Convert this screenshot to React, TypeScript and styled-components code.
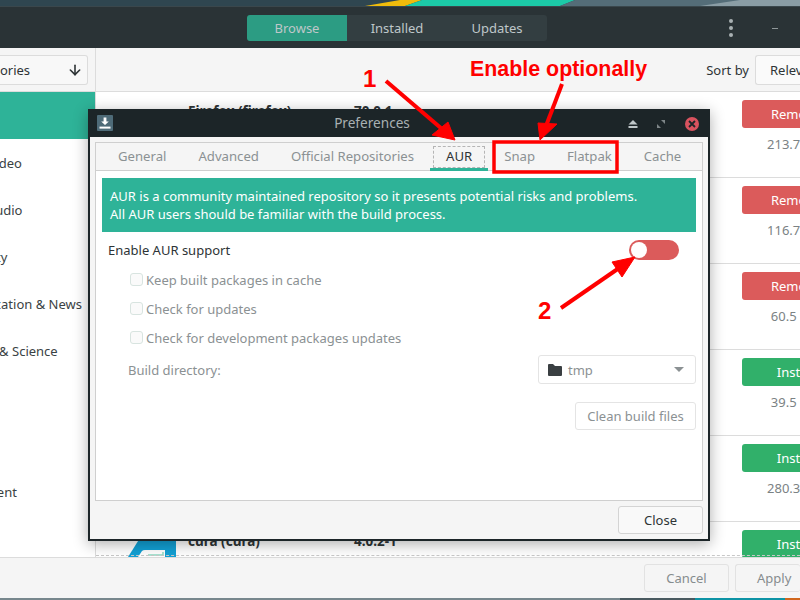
import React from 'react';
import styled, { createGlobalStyle } from 'styled-components';
import { ArrowDown } from 'lucide-react';

const Global = createGlobalStyle`
  html, body { margin: 0; padding: 0; }
  body { width: 800px; height: 600px; overflow: hidden; font-family: "Noto Sans", sans-serif; font-size: 13px; color: #2e3436; }
  * { box-sizing: border-box; }
`;

const Screen = styled.div`
  position: relative;
  width: 800px;
  height: 600px;
  overflow: hidden;
  display: flex;
  flex-direction: column;
  background: #f5f5f5;
`;

const TopWallpaper = styled.svg`
  display: block;
  flex: 0 0 6px;
  width: 800px;
  height: 6px;
`;

const BottomWallpaper = styled.svg`
  display: block;
  flex: 0 0 2px;
  width: 800px;
  height: 2px;
`;

const HeaderBar = styled.header`
  flex: 0 0 42px;
  display: flex;
  align-items: center;
  justify-content: center;
  position: relative;
  padding-right: 6px;
  background: #2a3336;
  border-top: 1px solid #3a474c;
`;

const Switcher = styled.div`
  display: flex;
  height: 26px;
  border-radius: 3px;
  overflow: hidden;
`;

const SwitchTab = styled.div<{ $active?: boolean }>`
  width: 100px;
  display: flex;
  align-items: center;
  justify-content: center;
  color: #bfc7c9;
  background: ${(p) => (p.$active ? '#2c9c83' : '#333e41')};
`;

const HeaderTools = styled.div`
  position: absolute;
  right: 22px;
  top: 0;
  bottom: 0;
  display: flex;
  align-items: center;
  gap: 39px;
`;

const Kebab = styled.div`
  display: flex;
  flex-direction: column;
  gap: 3px;
`;

const Dot = styled.span`
  width: 4px;
  height: 4px;
  border-radius: 50%;
  background: #a9b1b3;
`;

const Minimize = styled.span`
  width: 6px;
  height: 1px;
  background: #8f9799;
  margin-top: 1px;
`;

const Main = styled.div`
  flex: 1;
  display: flex;
  min-height: 0;
`;

const Sidebar = styled.aside`
  flex: 0 0 96px;
  display: flex;
  flex-direction: column;
  overflow: hidden;
  background: #fff;
  border-right: 1px solid #dcdcdc;
`;

const SidebarTop = styled.div`
  flex: 0 0 44px;
  display: flex;
  align-items: center;
  padding-right: 7px;
  background: #f5f5f5;
  border-bottom: 1px solid #dcdcdc;
`;

const Dropdown = styled.div`
  width: 88px;
  height: 30px;
  flex: 0 0 88px;
  display: flex;
  align-items: center;
  justify-content: space-between;
  padding-right: 4px;
  background: #f8f8f8;
  border: 1px solid #dcdcdc;
  border-left: 0;
  border-radius: 0 3px 3px 0;
  white-space: nowrap;
`;

const DropdownLabel = styled.span`
  margin-left: -54px;
`;

const Category = styled.div<{ $active?: boolean }>`
  flex: 0 0 47px;
  display: flex;
  align-items: center;
  white-space: nowrap;
  background: ${(p) => (p.$active ? '#2eb398' : 'transparent')};
`;

const CategoryLabel = styled.span`
  margin-left: -65px;
  color: #3a4244;
`;

const Content = styled.section`
  flex: 1;
  min-width: 0;
  display: flex;
  flex-direction: column;
  overflow: hidden;
  position: relative;
`;

const Toolbar = styled.div`
  flex: 0 0 44px;
  display: flex;
  align-items: center;
  justify-content: flex-end;
  gap: 6px;
  background: #f5f5f5;
  border-bottom: 1px solid #dcdcdc;
`;

const SortButton = styled.div`
  width: 45px;
  height: 30px;
  padding-left: 14px;
  display: flex;
  align-items: center;
  overflow: hidden;
  white-space: nowrap;
  background: #fafafa;
  border: 1px solid #dcdcdc;
  border-right: 0;
  border-radius: 3px 0 0 3px;
`;

const Row = styled.div`
  flex: 0 0 86px;
  width: 753px;
  display: flex;
  padding: 8px 0 0 32px;
  background: #fff;
  border-bottom: 1px solid #dcdcdc;
`;

const RowIcon = styled.svg`
  flex: 0 0 48px;
  width: 48px;
  height: 48px;
`;

const RowName = styled.div`
  flex: 0 0 166px;
  margin-left: 12px;
  padding-top: 2px;
  font-weight: 700;
  font-size: 13.5px;
  color: #2e3436;
`;

const RowVersion = styled.div`
  flex: 1;
  padding-top: 2px;
  font-weight: 700;
  font-size: 13.5px;
  color: #2e3436;
`;

const RowAction = styled.div`
  flex: 0 0 107px;
  display: flex;
  flex-direction: column;
  align-items: center;
  gap: 7px;
  white-space: nowrap;
  color: #7b8284;
`;

const ActionButton = styled.div<{ $tone: 'red' | 'green' }>`
  width: 107px;
  height: 28px;
  display: flex;
  align-items: center;
  justify-content: center;
  color: #fff;
  border-radius: 3px;
  background: ${(p) => (p.$tone === 'red' ? '#db5b5b' : '#31b06a')};
`;

const Overshoot = styled.div`
  position: absolute;
  left: 0;
  right: 0;
  bottom: 1px;
  border-top: 1px dashed #c8c8c8;
`;

const Footer = styled.footer`
  flex: 0 0 41px;
  display: flex;
  justify-content: flex-end;
  align-items: center;
  gap: 6px;
  background: #f5f5f5;
  border-top: 1px solid #dcdcdc;
`;

const FooterButton = styled.div<{ $w: number }>`
  width: ${(p) => p.$w}px;
  height: 28px;
  display: flex;
  align-items: center;
  justify-content: ${(p) => (p.$w < 70 ? 'flex-start' : 'center')};
  padding-left: ${(p) => (p.$w < 70 ? '21px' : '0')};
  white-space: nowrap;
  color: #868c8e;
  background: #f5f5f5;
  border: 1px solid #e2e2e2;
  border-right: ${(p) => (p.$w < 70 ? '0' : '1px solid #e2e2e2')};
  border-radius: 3px;
`;

const Dialog = styled.div`
  position: absolute;
  left: 88px;
  top: 109px;
  width: 622px;
  height: 432px;
  display: flex;
  flex-direction: column;
  background: #f5f5f5;
  border: 2px solid #1c2528;
  border-top-width: 1px;
  box-shadow: 0 3px 14px rgba(0, 0, 0, 0.32);
`;

const TitleBar = styled.div`
  flex: 0 0 27px;
  position: relative;
  display: flex;
  align-items: center;
  justify-content: center;
  padding: 0 54px 2px 0;
  font-size: 13.6px;
  background: #1c2528;
  color: #a9b1b3;
`;

const AppIcon = styled.div`
  position: absolute;
  left: 7px;
  top: 5px;
  width: 16px;
  height: 16px;
  border-radius: 1px;
  background: #4e6b78;
  display: flex;
  align-items: center;
  justify-content: center;
`;

const TitleTools = styled.div`
  position: absolute;
  right: 9px;
  top: 0;
  bottom: 0;
  display: flex;
  align-items: center;
`;

const CloseDot = styled.div`
  width: 14px;
  height: 14px;
  margin-left: 20px;
  border-radius: 50%;
  background: #d9535f;
  display: flex;
  align-items: center;
  justify-content: center;
`;

const Notebook = styled.div`
  margin: 5px 5px 0 5px;
  height: 359px;
  display: flex;
  flex-direction: column;
  border: 1px solid #cfcfcf;
`;

const TabStrip = styled.div`
  flex: 0 0 28px;
  display: flex;
  padding-left: 6px;
  font-size: 13.15px;
  background: #f5f5f5;
  border-bottom: 1px solid #cfcfcf;
`;

const Tab = styled.div<{ $active?: boolean }>`
  display: flex;
  align-items: center;
  justify-content: center;
  white-space: nowrap;
  padding: ${(p) => (p.$active ? '0 3px' : '0 16px 2px')};
  color: ${(p) => (p.$active ? '#2e3436' : '#8b9193')};
  ${(p) => (p.$active ? 'border-bottom: 3px solid #2eb398; margin-bottom: -1px;' : '')}
`;

const ActiveFocus = styled.span`
  border: 1px dashed #b5b5b5;
  padding: 0 12px 2px;
  margin-top: 2px;
`;

const Page = styled.div`
  flex: 1;
  background: #fff;
  padding: 7px 6px 0 6px;
  display: flex;
  flex-direction: column;
`;

const InfoBox = styled.div`
  height: 54px;
  flex: 0 0 54px;
  padding: 9px 8px 0;
  background: #2eb398;
  color: #fff;
  line-height: 18px;
`;

const EnableRow = styled.div`
  margin-top: 8px;
  height: 20px;
  display: flex;
  align-items: center;
  justify-content: space-between;
  padding: 0 17px 0 6px;
`;

const Toggle = styled.div`
  width: 50px;
  height: 20px;
  border-radius: 10px;
  background: #db5b5b;
  padding: 2px;
`;

const Knob = styled.div`
  width: 16px;
  height: 16px;
  border-radius: 50%;
  background: #fff;
`;

const OptionList = styled.div`
  margin-top: 5px;
  padding-left: 28px;
  display: flex;
  flex-direction: column;
`;

const CheckRow = styled.div`
  height: 29px;
  display: flex;
  align-items: center;
  gap: 3px;
  color: #8b9193;
`;

const CheckBox = styled.span`
  width: 13px;
  height: 13px;
  border: 1px solid #d8e4e0;
  border-radius: 3px;
  background: #fafafa;
`;

const DirectoryRow = styled.div`
  margin-top: 3px;
  padding-left: 26px;
  display: flex;
  align-items: center;
  justify-content: space-between;
  color: #8b9193;
`;

const Combo = styled.div`
  width: 158px;
  height: 29px;
  display: flex;
  align-items: center;
  gap: 6px;
  padding: 0 11px 0 9px;
  background: #fff;
  border: 1px solid #e4e4e4;
  border-radius: 3px;
`;

const Caret = styled.span`
  margin-left: auto;
  width: 0;
  height: 0;
  border-left: 5px solid transparent;
  border-right: 5px solid transparent;
  border-top: 5px solid #8b9193;
`;

const CleanRow = styled.div`
  margin-top: 18px;
  display: flex;
  justify-content: flex-end;
`;

const CleanButton = styled.div`
  width: 121px;
  height: 28px;
  display: flex;
  align-items: center;
  justify-content: center;
  color: #8b9193;
  border: 1px solid #e4e4e4;
  border-radius: 3px;
`;

const DialogActions = styled.div`
  flex: 1;
  display: flex;
  justify-content: flex-end;
  align-items: flex-start;
  padding: 5px 5px 0 0;
`;

const CloseButton = styled.div`
  width: 85px;
  height: 28px;
  display: flex;
  align-items: center;
  justify-content: center;
  background: #f9f9f9;
  border: 1px solid #d4d4d4;
  border-radius: 3px;
`;

const Callouts = styled.svg`
  position: absolute;
  left: 0;
  top: 0;
  width: 800px;
  height: 600px;
  pointer-events: none;
`;

const CalloutText = styled.div<{ $size: number; $x: number; $y: number }>`
  position: absolute;
  left: ${(p) => p.$x}px;
  top: ${(p) => p.$y}px;
  font-family: "Liberation Sans", Arial, sans-serif;
  font-weight: 700;
  font-size: ${(p) => p.$size}px;
  line-height: 1;
  color: #ff0000;
  white-space: nowrap;
`;

const categories = ['Featured', 'Photo & Video', 'Music & Audio', 'Productivity', 'Communication & News', 'Education & Science', 'Games', 'Utilities', 'Development'];

const rows = [
  { name: 'Firefox (firefox)', version: '70.0.1', action: 'Remove', size: '213.7 MB', tone: 'red' as const },
  { name: '', version: '', action: 'Remove', size: '116.7 MB', tone: 'red' as const },
  { name: '', version: '', action: 'Remove', size: '60.5 MB', tone: 'red' as const },
  { name: '', version: '', action: 'Install', size: '39.5 MB', tone: 'green' as const },
  { name: '', version: '', action: 'Install', size: '280.3 MB', tone: 'green' as const },
  { name: 'cura (cura)', version: '4.0.2-1', action: 'Install', size: '', tone: 'green' as const, icon: true },
];

const tabs = [
  { label: 'General' },
  { label: 'Advanced' },
  { label: 'Official Repositories' },
  { label: 'AUR', active: true },
  { label: 'Snap' },
  { label: 'Flatpak' },
  { label: 'Cache' },
];

const options = ['Keep built packages in cache', 'Check for updates', 'Check for development packages updates'];

export default function App() {
  return (
    <Screen>
      <Global />
      <TopWallpaper viewBox="0 0 800 6">
        <rect width="800" height="6" fill="#2f4650" />
        <polygon points="365,6 400,0 422,0 405,6" fill="#f0bc0c" />
        <polygon points="405,6 422,0 575,0 560,6" fill="#1ccaa8" />
        <polygon points="560,6 575,0 800,0 800,6" fill="#546d78" />
        <polygon points="700,6 740,0 800,0 800,6" fill="#8a9da5" />
      </TopWallpaper>
      <HeaderBar>
        <Switcher>
          <SwitchTab $active>Browse</SwitchTab>
          <SwitchTab>Installed</SwitchTab>
          <SwitchTab>Updates</SwitchTab>
        </Switcher>
        <HeaderTools>
          <Kebab>
            <Dot />
            <Dot />
            <Dot />
          </Kebab>
          <Minimize />
        </HeaderTools>
      </HeaderBar>
      <Main>
        <Sidebar>
          <SidebarTop>
            <Dropdown>
              <DropdownLabel>All Categories</DropdownLabel>
              <ArrowDown size={16} strokeWidth={2.4} color="#2e3436" />
            </Dropdown>
          </SidebarTop>
          {categories.map((c, i) => (
            <Category key={c} $active={i === 0}>
              <CategoryLabel>{c}</CategoryLabel>
            </Category>
          ))}
        </Sidebar>
        <Content>
          <Toolbar>
            <span>Sort by</span>
            <SortButton>Relevance</SortButton>
          </Toolbar>
          {rows.map((r, i) => (
            <Row key={i}>
              {r.icon ? (
                <RowIcon viewBox="0 0 48 48">
                  <polygon points="0,27 17,0 48,0 48,48 0,48" fill="#12a0d4" />
                  <path d="M10 27 L14 21 Q15 20 17 20 H37 V27 Z" fill="#fff" />
                  <path d="M20 25 H35 V22" fill="none" stroke="#8fdcc4" strokeWidth="1.5" />
                </RowIcon>
              ) : (
                <RowIcon as="div" />
              )}
              <RowName>{r.name}</RowName>
              <RowVersion>{r.version}</RowVersion>
              <RowAction>
                <ActionButton $tone={r.tone}>{r.action}</ActionButton>
                <span>{r.size}</span>
              </RowAction>
            </Row>
          ))}
          <Overshoot />
        </Content>
      </Main>
      <Footer>
        <FooterButton $w={85}>Cancel</FooterButton>
        <FooterButton $w={65}>Apply</FooterButton>
      </Footer>
      <BottomWallpaper viewBox="0 0 800 2">
        <rect width="800" height="2" fill="#77878d" />
        <rect x="620" width="80" height="2" fill="#4a5a60" />
        <rect x="695" width="90" height="2" fill="#0d93a5" />
        <rect x="785" width="15" height="2" fill="#d0661c" />
      </BottomWallpaper>

      <Dialog>
        <TitleBar>
          <AppIcon>
            <svg width="12" height="12" viewBox="0 0 12 12">
              <path d="M4.6 0.5 H7.4 V4.4 H9.8 L6 8 L2.2 4.4 H4.6 Z" fill="#fff" />
              <rect x="0.5" y="9.6" width="11" height="2" fill="#fff" />
            </svg>
          </AppIcon>
          Preferences
          <TitleTools>
            <svg width="10" height="8" viewBox="0 0 10 8">
              <polygon points="5,0 9.5,4.5 0.5,4.5" fill="#bfc7c9" />
              <rect x="0.5" y="6" width="9" height="2" fill="#bfc7c9" />
            </svg>
            <svg width="8" height="8" viewBox="0 0 8 8" style={{ marginLeft: 19 }}>
              <polygon points="4,0 8,0 8,4" fill="#7d8587" />
              <polygon points="0,4 4,8 0,8" fill="#7d8587" />
            </svg>
            <CloseDot>
              <svg width="8" height="8" viewBox="0 0 8 8">
                <path d="M1 1 L7 7 M7 1 L1 7" stroke="#1c2528" strokeWidth="1.8" />
              </svg>
            </CloseDot>
          </TitleTools>
        </TitleBar>
        <Notebook>
          <TabStrip>
            {tabs.map((t) => (
              <Tab key={t.label} $active={t.active}>
                {t.active ? <ActiveFocus>{t.label}</ActiveFocus> : t.label}
              </Tab>
            ))}
          </TabStrip>
          <Page>
            <InfoBox>
              AUR is a community maintained repository so it presents potential risks and problems.
              <br />
              All AUR users should be familiar with the build process.
            </InfoBox>
            <EnableRow>
              <span>Enable AUR support</span>
              <Toggle>
                <Knob />
              </Toggle>
            </EnableRow>
            <OptionList>
              {options.map((o) => (
                <CheckRow key={o}>
                  <CheckBox />
                  {o}
                </CheckRow>
              ))}
            </OptionList>
            <DirectoryRow>
              <span>Build directory:</span>
              <Combo>
                <svg width="14" height="12" viewBox="0 0 14 12">
                  <path d="M0 1 Q0 0 1 0 H5 L7 2 H13 Q14 2 14 3 V11 Q14 12 13 12 H1 Q0 12 0 11 Z" fill="#3a3f42" />
                </svg>
                tmp
                <Caret />
              </Combo>
            </DirectoryRow>
            <CleanRow>
              <CleanButton>Clean build files</CleanButton>
            </CleanRow>
          </Page>
        </Notebook>
        <DialogActions>
          <CloseButton>Close</CloseButton>
        </DialogActions>
      </Dialog>

      <Callouts viewBox="0 0 800 600">
        <g stroke="#ff0000" fill="#ff0000">
          <rect x="494" y="142" width="123" height="30" fill="none" strokeWidth="3.5" />
          <line x1="386" y1="81" x2="442" y2="129" strokeWidth="4" />
          <polygon points="455,140 432,135 448,122" strokeWidth="1" />
          <line x1="562" y1="84" x2="546" y2="126" strokeWidth="4" />
          <polygon points="540,140 538,123 557,124" strokeWidth="1" />
          <line x1="561" y1="308" x2="622" y2="266" strokeWidth="4" />
          <polygon points="635,257 612,262 622,277" strokeWidth="1" />
        </g>
      </Callouts>
      <CalloutText $size={24} $x={363} $y={67}>1</CalloutText>
      <CalloutText $size={21.4} $x={470} $y={59}>Enable optionally</CalloutText>
      <CalloutText $size={24} $x={538} $y={299}>2</CalloutText>
    </Screen>
  );
}
